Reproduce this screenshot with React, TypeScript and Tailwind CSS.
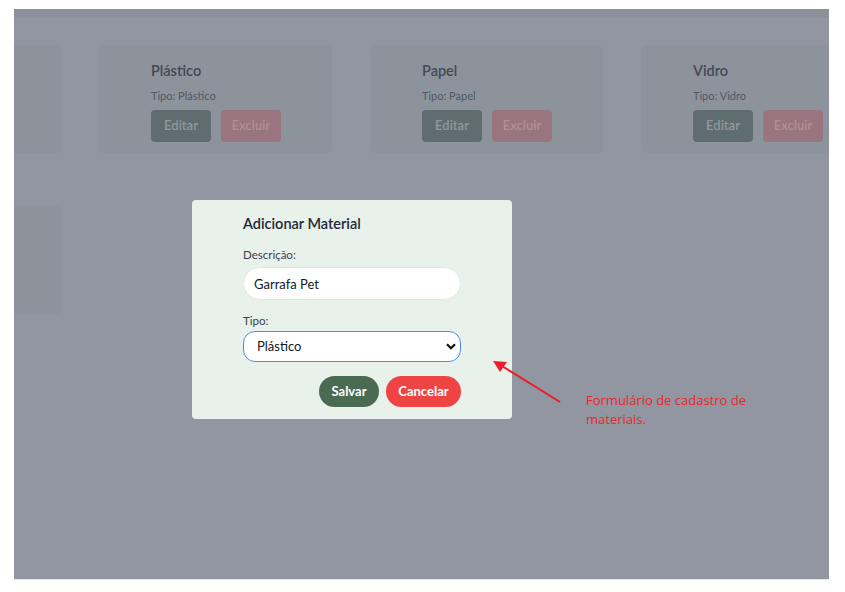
import React, { useState } from "react";

type Material = { id: number; descricao: string; tipo: string };

const materiais: Material[] = [
  { id: 2, descricao: "Plástico", tipo: "Plástico" },
  { id: 3, descricao: "Papel", tipo: "Papel" },
  { id: 4, descricao: "Vidro", tipo: "Vidro" },
];

const MaterialCard: React.FC<{ material?: Material }> = ({ material }) => {
  return (
    <div className="w-[233px] h-[108px] shrink-0 rounded-md bg-[#8c939b] pl-[52px] pt-[16px]">
      {material && (
        <>
          <h2 className="text-[14.5px] font-semibold leading-5 text-[#434a55]">
            {material.descricao}
          </h2>
          <p className="mt-[7px] text-[11px] leading-4 text-[#515863]">
            Tipo: {material.tipo}
          </p>
          <div className="mt-[6px] flex gap-[10px]">
            <button className="h-[32px] w-[60px] rounded bg-[#5f6d71] text-[13px] font-semibold text-[#8f999d]">
              Editar
            </button>
            <button className="h-[32px] w-[60px] rounded bg-[#9a747e] text-[13px] font-semibold text-[#b0919a]">
              Excluir
            </button>
          </div>
        </>
      )}
    </div>
  );
};

const App: React.FC = () => {
  const [descricao, setDescricao] = useState("Garrafa Pet");
  const [tipo, setTipo] = useState("Plástico");

  return (
    <div
      className="relative h-[592px] w-[845px] overflow-hidden bg-white pt-[9px] pl-[14px]"
      style={{ fontFamily: "Lato, 'Open Sans', sans-serif" }}
    >
      <div className="relative h-[571px] w-[815px] overflow-hidden bg-[#9196a0] border-b border-[#e5e7eb]">
        <div className="h-[9px] bg-[#8b9099] border-b border-[#8f949d]" />

        {/* lista de materiais (escurecida pelo modal) */}
        <div className="ml-[-186px] mt-[27px] flex flex-col gap-[53px]">
          <div className="flex gap-[38px]">
            <MaterialCard />
            {materiais.map((m) => (
              <MaterialCard key={m.id} material={m} />
            ))}
          </div>
          <div className="flex gap-[38px]">
            <MaterialCard />
          </div>
        </div>

        {/* modal */}
        <div className="absolute left-[178px] top-[191px] h-[219px] w-[320px] rounded bg-[#e8f1ea] pl-[51px] pr-[51px] pt-[14px]">
          <h3 className="text-[14.5px] font-semibold leading-5 text-[#1f2937]">
            Adicionar Material
          </h3>
          <label className="mt-[13px] block text-[11.5px] leading-4 text-[#374151]">
            Descrição:
          </label>
          <input
            value={descricao}
            onChange={(e) => setDescricao(e.target.value)}
            className="mt-[4px] h-[33px] w-[218px] rounded-full border border-[#e2e6e3] bg-white px-[10px] text-[13px] text-[#111827] outline-none"
          />
          <label className="mt-[13px] block text-[11.5px] leading-4 text-[#374151]">
            Tipo:
          </label>
          <div className="relative mt-[2px] w-[218px]">
            <select
              value={tipo}
              onChange={(e) => setTipo(e.target.value)}
              className="h-[31px] w-full appearance-none rounded-xl border border-[#4b8fe8] bg-white pl-[13px] text-[13px] text-[#111827] outline-none"
            >
              <option>Plástico</option>
              <option>Papel</option>
              <option>Vidro</option>
              <option>Metal</option>
            </select>
            <svg
              className="pointer-events-none absolute right-[5px] top-[12px]"
              width="10"
              height="7"
              viewBox="0 0 10 7"
            >
              <path d="M1 1.2 L5 5.2 L9 1.2" fill="none" stroke="#111" strokeWidth="2.2" />
            </svg>
          </div>
          <div className="mt-[14px] flex justify-end gap-[7px]">
            <button className="h-[31px] w-[60px] rounded-full bg-[#4a6b51] text-[13px] font-bold text-white">
              Salvar
            </button>
            <button className="h-[31px] w-[75px] rounded-full bg-[#ef4444] text-[13px] font-bold text-white">
              Cancelar
            </button>
          </div>
        </div>

        {/* anotação */}
        <p
          className="absolute left-[572px] top-[382px] text-[13px] leading-[19px] text-[#e8262c]"
          style={{ fontFamily: "'Open Sans', sans-serif" }}
        >
          Formulário de cadastro de
          <br />
          materiais.
        </p>
      </div>

      <svg className="pointer-events-none absolute left-0 top-0" width="845" height="592">
        <line x1="560" y1="402" x2="502" y2="366" stroke="#e8202a" strokeWidth="2" />
        <polygon points="493,361 507,362 500,372" fill="#e8202a" />
      </svg>
    </div>
  );
};

export default App;
